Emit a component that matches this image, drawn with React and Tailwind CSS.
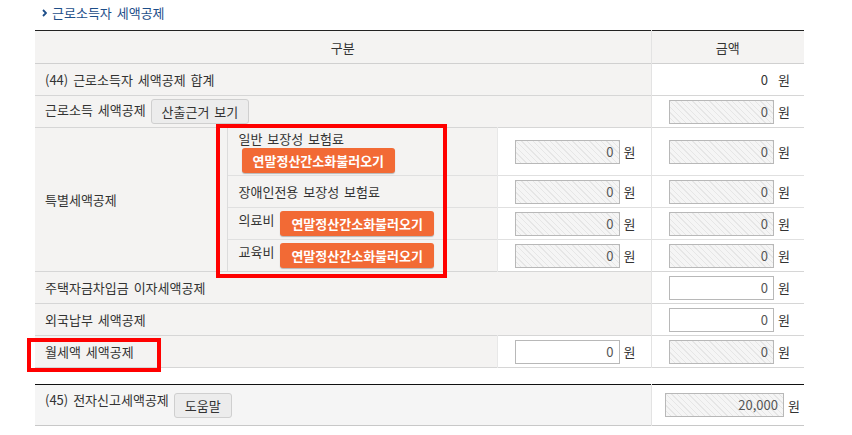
import React from 'react';

const hatch =
  'bg-[repeating-linear-gradient(45deg,#f5f5f5_0px,#f5f5f5_3px,#e6e6e6_3px,#e6e6e6_4px)]';

function Amount({ value = '0', hatched = true, width = 'w-[105px]' }) {
  return (
    <div className="flex items-center justify-end">
      <div
        className={`${width} h-[24px] border border-[#b8b8b8] text-right pr-[5px] leading-[22px] text-[#555] ${
          hatched ? hatch : 'bg-white'
        }`}
      >
        {value}
      </div>
      <span className="ml-[4px] text-[#333]">원</span>
    </div>
  );
}

function OrangeButton() {
  return (
    <button className="h-[25px] px-[11px] rounded-[3px] bg-[#f26a35] text-white font-bold text-[13px] leading-[25px] shadow-[0_1px_1px_rgba(0,0,0,0.25)]">
      연말정산간소화불러오기
    </button>
  );
}

function GreyButton({ children }) {
  return (
    <button className="h-[25px] px-[10px] rounded-[3px] bg-[#ececec] border border-[#cfcfcf] text-[#333] text-[13px] leading-[23px] [word-spacing:2px]">
      {children}
    </button>
  );
}

export default function App() {
  const label = 'bg-[#f4f3f2] pl-[10px] text-left font-normal';
  const sub = 'bg-[#f4f3f2] pl-[11px] text-left border-l border-l-[#dcdcdc]';
  const mid = 'bg-white pr-[15px] border-l border-l-[#e8e8e8]';
  const amt = 'bg-white pr-[14px] border-l border-l-[#e3e3e3]';

  return (
    <div className="relative w-[852px] h-[435px] bg-white text-[13px] text-[#333] [word-spacing:2px] font-['Noto_Sans_CJK_KR',sans-serif]">
      <div className="h-[30px] pl-[42px] pt-[4px] flex items-start">
        <div className="flex items-center h-[18px] text-[#1d4e89] leading-[18px]">
          <svg width="5" height="8" viewBox="0 0 5 8" className="mr-[5px]">
            <path d="M1 1 L4 4 L1 7" stroke="#1d4e89" strokeWidth="1.8" fill="none" />
          </svg>
          근로소득자 세액공제
        </div>
      </div>

      <table className="ml-[35px] w-[769px] table-fixed border-collapse leading-[17px]">
        <colgroup>
          <col className="w-[192px]" />
          <col className="w-[270px]" />
          <col className="w-[154px]" />
          <col className="w-[153px]" />
        </colgroup>
        <thead>
          <tr className="h-[33px] border-t border-t-[#222] border-b border-b-[#d0d0d0]">
            <th colSpan={3} className="bg-[#f4f3f2] font-normal">구분</th>
            <th className="bg-[#f4f3f2] font-normal border-l border-l-[#e3e3e3]">금액</th>
          </tr>
        </thead>
        <tbody>
          <tr className="h-[32px] border-b border-b-[#d6d6d6]">
            <td colSpan={3} className={label}>(44) 근로소득자 세액공제 합계</td>
            <td className={amt}>
              <div className="flex items-center justify-end">
                <span className="w-[105px] text-right pr-[6px] text-[#333]">0</span>
                <span className="ml-[4px]">원</span>
              </div>
            </td>
          </tr>
          <tr className="h-[32px] border-b border-b-[#d6d6d6]">
            <td colSpan={3} className={label}>
              <div className="flex items-center">
                <span className="-mt-[5px]">근로소득 세액공제</span>
                <span className="ml-[5px]">
                  <GreyButton>산출근거 보기</GreyButton>
                </span>
              </div>
            </td>
            <td className={amt}><Amount /></td>
          </tr>

          <tr className="h-[48px] border-b border-b-[#e0e0e0]">
            <td rowSpan={4} className={`${label} border-b border-b-[#d6d6d6]`}>특별세액공제</td>
            <td className={`${sub} align-top pt-[2px]`}>
              <div>일반 보장성 보험료</div>
              <div className="mt-[1px] ml-[3px]"><OrangeButton /></div>
            </td>
            <td className={mid}><Amount /></td>
            <td className={amt}><Amount /></td>
          </tr>
          <tr className="h-[32px] border-b border-b-[#e0e0e0]">
            <td className={sub}>장애인전용 보장성 보험료</td>
            <td className={mid}><Amount /></td>
            <td className={amt}><Amount /></td>
          </tr>
          <tr className="h-[32px] border-b border-b-[#e0e0e0]">
            <td className={sub}>
              <div className="flex items-center">
                <span className="-mt-[9px]">의료비</span>
                <span className="ml-[6px]"><OrangeButton /></span>
              </div>
            </td>
            <td className={mid}><Amount /></td>
            <td className={amt}><Amount /></td>
          </tr>
          <tr className="h-[32px] border-b border-b-[#d6d6d6]">
            <td className={sub}>
              <div className="flex items-center">
                <span className="-mt-[9px]">교육비</span>
                <span className="ml-[6px]"><OrangeButton /></span>
              </div>
            </td>
            <td className={mid}><Amount /></td>
            <td className={amt}><Amount /></td>
          </tr>

          <tr className="h-[32px] border-b border-b-[#d6d6d6]">
            <td colSpan={3} className={label}>주택자금차입금 이자세액공제</td>
            <td className={amt}><Amount hatched={false} /></td>
          </tr>
          <tr className="h-[32px] border-b border-b-[#d6d6d6]">
            <td colSpan={3} className={label}>외국납부 세액공제</td>
            <td className={amt}><Amount hatched={false} /></td>
          </tr>
          <tr className="h-[32px] border-b border-b-[#d6d6d6]">
            <td colSpan={2} className={label}>월세액 세액공제</td>
            <td className={mid}><Amount hatched={false} /></td>
            <td className={amt}><Amount /></td>
          </tr>
        </tbody>
      </table>

      <table className="mt-[16px] ml-[35px] w-[769px] table-fixed border-collapse leading-[17px]">
        <colgroup>
          <col className="w-[616px]" />
          <col className="w-[153px]" />
        </colgroup>
        <tbody>
          <tr className="h-[41px] border-t border-t-[#111] border-b border-b-[#c8c8c8]">
            <td className="bg-[#f5f5f5] pl-[10px]">
              <div className="flex items-center">
                <span className="-mt-[12px]">(45) 전자신고세액공제</span>
                <span className="ml-[5px]"><GreyButton>도움말</GreyButton></span>
              </div>
            </td>
            <td className="bg-white pr-[4px] border-l border-l-[#e3e3e3]">
              <Amount value="20,000" width="w-[119px]" />
            </td>
          </tr>
        </tbody>
      </table>

      <div className="absolute left-[216px] top-[124px] w-[231px] h-[154px] border-4 border-[#ff0000]" />
      <div className="absolute left-[27px] top-[338px] w-[134px] h-[34px] border-4 border-[#ff0000]" />
    </div>
  );
}
